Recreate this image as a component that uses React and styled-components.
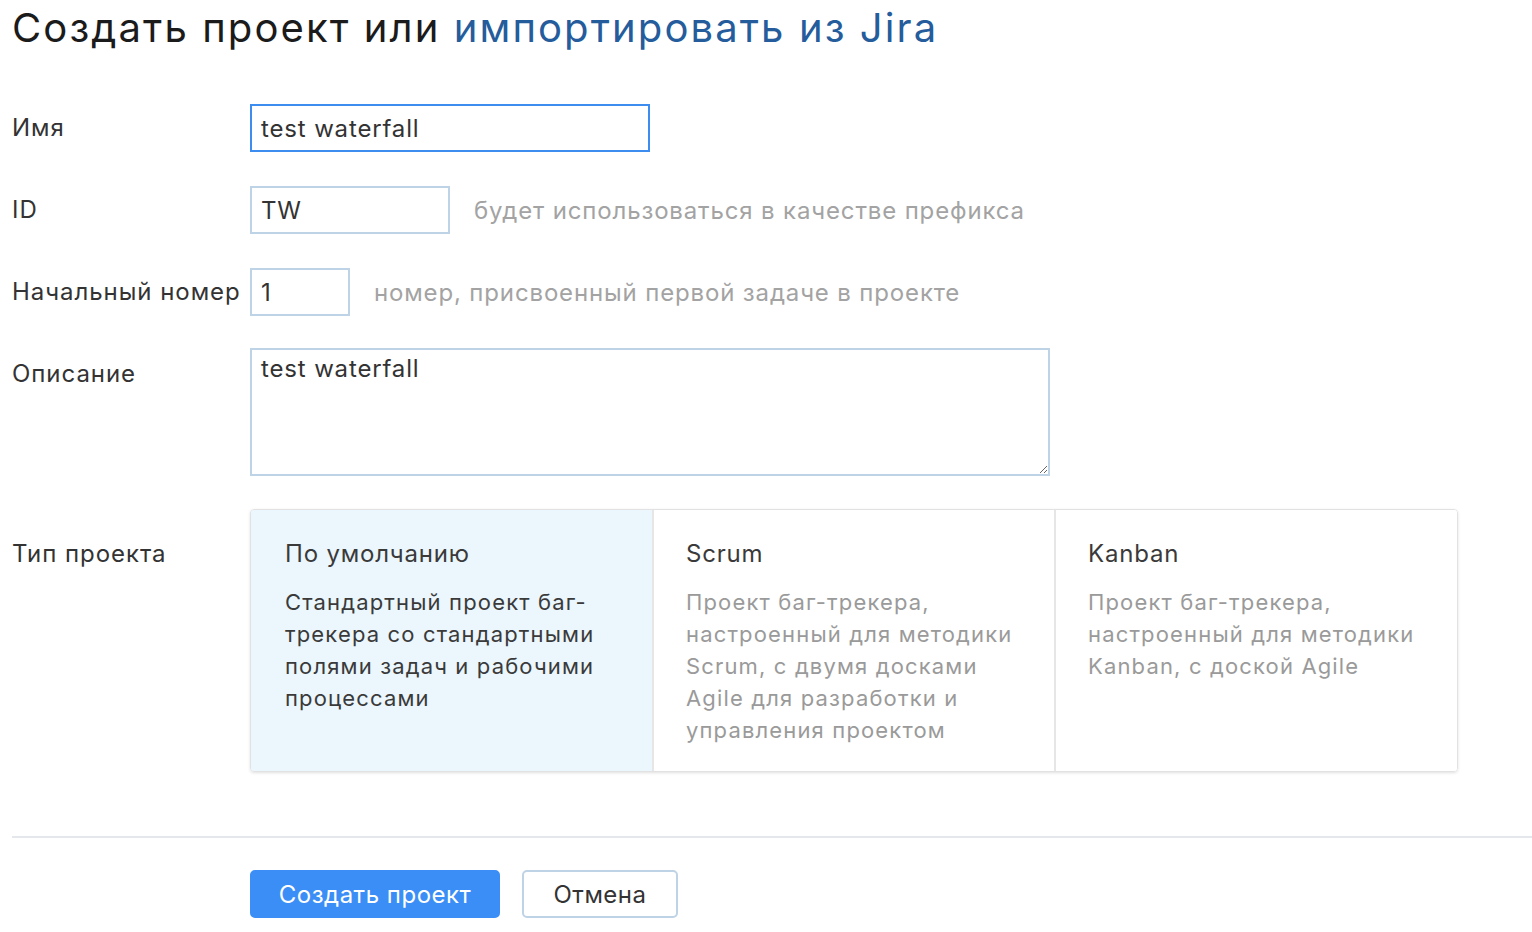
import React from "react";
import styled, { createGlobalStyle } from "styled-components";

const Global = createGlobalStyle`
  body {
    margin: 0;
    background: #fff;
    font-family: Inter, "Noto Sans", sans-serif;
    color: #333;
  }
`;

const Page = styled.div`
  padding: 0 0 0 12px;
`;

const Title = styled.h1`
  margin: 0;
  padding-top: 2px;
  font-size: 40px;
  font-weight: 400;
  line-height: 52px;
  color: #1b1b1b;
  letter-spacing: 2.1px;

  a {
    color: #255c9c;
    text-decoration: none;
  }
`;

const Form = styled.div`
  display: grid;
  grid-template-columns: 238px 1fr;
  row-gap: 34px;
  margin-top: 50px;
  align-items: start;
`;

const Label = styled.div`
  font-size: 24px;
  line-height: 48px;
  color: #333;
  letter-spacing: 0.95px;
  white-space: nowrap;
  padding-top: ${({ $top }) => $top || 0}px;
`;

const Field = styled.div`
  display: flex;
  align-items: center;
  gap: 24px;
  margin-top: ${({ $mt }) => $mt || 0}px;
`;

const Input = styled.input`
  box-sizing: border-box;
  width: ${({ $w }) => $w}px;
  height: 48px;
  padding: 0 9px;
  font-family: inherit;
  font-size: 24px;
  letter-spacing: 0.85px;
  color: #333;
  border: ${({ $focus }) => ($focus ? "2px solid #3d8cf0" : "2px solid #bfd3e6")};
  border-radius: 0;
  outline: none;
  background: #fff;
`;

const Hint = styled.span`
  font-size: 24px;
  color: #a3a3a3;
  letter-spacing: 0.85px;
  white-space: nowrap;
`;

const TextArea = styled.textarea`
  box-sizing: border-box;
  width: 800px;
  height: 128px;
  padding: 3px 9px;
  font-family: inherit;
  font-size: 24px;
  line-height: 32px;
  letter-spacing: 0.85px;
  color: #333;
  border: 2px solid #bfd3e6;
  outline: none;
  resize: both;
`;

const Cards = styled.div`
  display: grid;
  grid-template-columns: repeat(3, 1fr);
  width: 1208px;
  height: 263px;
  box-sizing: border-box;
  border: 1px solid #e2e2e2;
  border-radius: 4px;
  box-shadow: 0 1px 3px rgba(0, 0, 0, 0.12);
  overflow: hidden;
  margin-top: -1px;
`;

const Card = styled.div`
  padding: 26px 32px 26px ${({ $first }) => ($first ? 34 : 32)}px;
  background: ${({ $active }) => ($active ? "#ebf6fd" : "#fff")};
  border-left: ${({ $first }) => ($first ? "none" : "2px solid #e6e6e6")};
  margin-left: ${({ $first }) => ($first ? 0 : -1)}px;
`;

const CardTitle = styled.div`
  font-size: 24px;
  line-height: 36px;
  color: #3a3a3a;
  letter-spacing: 0.8px;
  margin-bottom: 14px;
`;

const CardText = styled.div`
  font-size: 22px;
  line-height: 32px;
  letter-spacing: 1.15px;
  color: ${({ $active }) => ($active ? "#3a3a3a" : "#9a9a9a")};
`;

const Divider = styled.hr`
  margin: 64px 0 32px;
  border: none;
  border-top: 2px solid #e4e8ec;
`;

const Actions = styled.div`
  display: flex;
  gap: 22px;
  padding-left: 238px;
`;

const Button = styled.button`
  box-sizing: border-box;
  height: 48px;
  padding: 0;
  font-family: inherit;
  font-size: 24px;
  letter-spacing: 0.5px;
  white-space: nowrap;
  border-radius: 5px;
  cursor: pointer;
  color: ${({ $primary }) => ($primary ? "#fff" : "#333")};
  background: ${({ $primary }) => ($primary ? "#3a8ef6" : "#fff")};
  border: 2px solid ${({ $primary }) => ($primary ? "#3a8ef6" : "#bfd3e6")};
  width: ${({ $w }) => $w}px;
`;

const types = [
  {
    title: "По умолчанию",
    text: "Стандартный проект баг-трекера со стандартными полями задач и рабочими процессами",
    active: true,
  },
  {
    title: "Scrum",
    text: "Проект баг-трекера, настроенный для методики Scrum, с двумя досками Agile для разработки и управления проектом",
  },
  {
    title: "Kanban",
    text: "Проект баг-трекера, настроенный для методики Kanban, с доской Agile",
  },
];

export default function App() {
  return (
    <Page>
      <Global />
      <Title>
        Создать проект или <a href="#">импортировать из Jira</a>
      </Title>
      <Form>
        <Label>Имя</Label>
        <Field>
          <Input $w={400} $focus defaultValue="test waterfall" />
        </Field>

        <Label>ID</Label>
        <Field>
          <Input $w={200} defaultValue="TW" />
          <Hint>будет использоваться в качестве префикса</Hint>
        </Field>

        <Label>Начальный номер</Label>
        <Field>
          <Input $w={100} defaultValue="1" />
          <Hint>номер, присвоенный первой задаче в проекте</Hint>
        </Field>

        <Label>Описание</Label>
        <Field $mt={-2}>
          <TextArea defaultValue="test waterfall" />
        </Field>

        <Label $top={20}>Тип проекта</Label>
        <Cards>
          {types.map((t, i) => (
            <Card key={t.title} $active={t.active} $first={i === 0}>
              <CardTitle>{t.title}</CardTitle>
              <CardText $active={t.active}>{t.text}</CardText>
            </Card>
          ))}
        </Cards>
      </Form>
      <Divider />
      <Actions>
        <Button $primary $w={250}>Создать проект</Button>
        <Button $w={156}>Отмена</Button>
      </Actions>
    </Page>
  );
}
